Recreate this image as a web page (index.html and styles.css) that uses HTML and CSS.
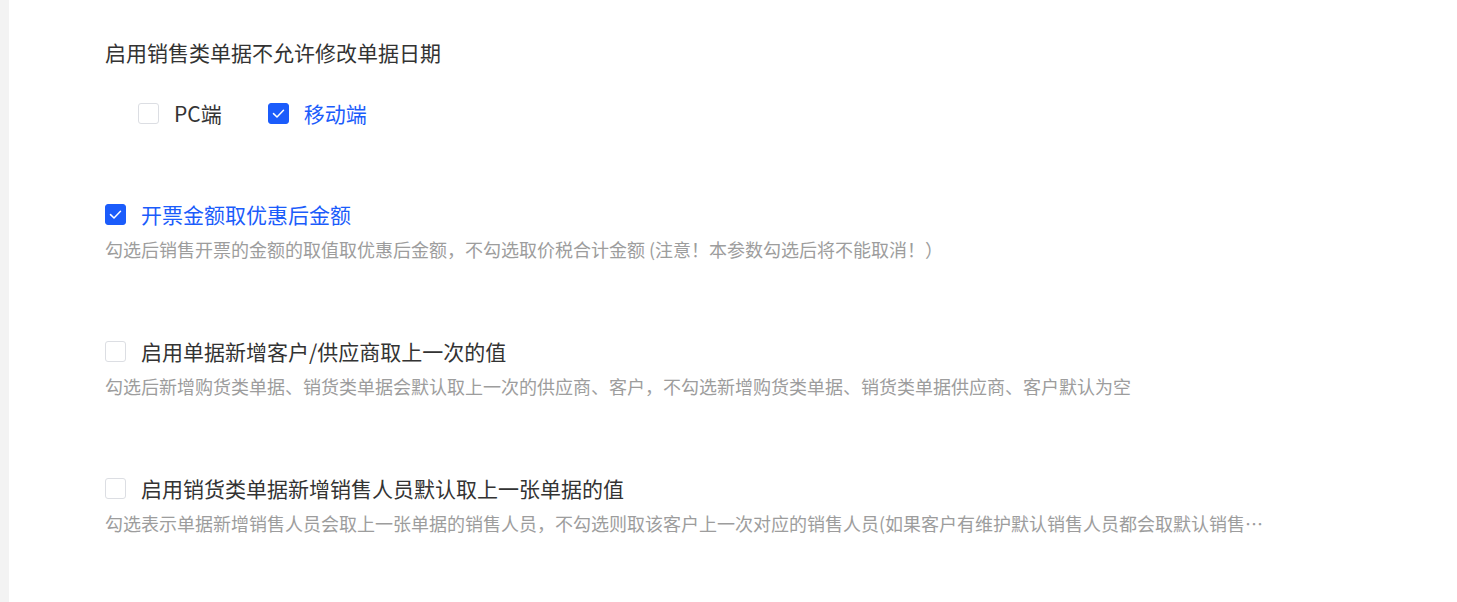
FILE: index.html
```html
<!DOCTYPE html>
<html lang="zh-CN">
<head>
    <meta charset="UTF-8">
    <title>单据参数设置</title>
    <link rel="stylesheet" href="styles.css">
</head>
<body>
    <div class="sideStrip"></div>

    <!-- Settings list -->
    <main class="settings">
        <section class="setting setting-first">
            <div class="settingTitle">启用销售类单据不允许修改单据日期</div>
            <div class="optionRow">
                <label class="check">
                    <span class="box"></span>
                    <span class="checkLabel">PC端</span>
                </label>
                <label class="check isChecked">
                    <span class="box">
                        <svg viewBox="0 0 21 21" width="21" height="21"><polyline points="5.5,10.6 9,14 15.5,7.2" fill="none" stroke="#fff" stroke-width="1.5" stroke-linecap="round" stroke-linejoin="round"/></svg>
                    </span>
                    <span class="checkLabel">移动端</span>
                </label>
            </div>
        </section>

        <section class="setting">
            <label class="check isChecked">
                <span class="box">
                    <svg viewBox="0 0 21 21" width="21" height="21"><polyline points="5.5,10.6 9,14 15.5,7.2" fill="none" stroke="#fff" stroke-width="1.5" stroke-linecap="round" stroke-linejoin="round"/></svg>
                </span>
                <span class="checkLabel">开票金额取优惠后金额</span>
            </label>
            <p class="desc">勾选后销售开票的金额的取值取优惠后金额，不勾选取价税合计金额 (注意！本参数勾选后将不能取消！）</p>
        </section>

        <section class="setting">
            <label class="check">
                <span class="box"></span>
                <span class="checkLabel">启用单据新增客户/供应商取上一次的值</span>
            </label>
            <p class="desc">勾选后新增购货类单据、销货类单据会默认取上一次的供应商、客户，不勾选新增购货类单据、销货类单据供应商、客户默认为空</p>
        </section>

        <section class="setting">
            <label class="check">
                <span class="box"></span>
                <span class="checkLabel">启用销货类单据新增销售人员默认取上一张单据的值</span>
            </label>
            <p class="desc">勾选表示单据新增销售人员会取上一张单据的销售人员，不勾选则取该客户上一次对应的销售人员(如果客户有维护默认销售人员都会取默认销售人员)</p>
        </section>
    </main>
</body>
</html>
```

FILE: styles.css
```css
/* Page base */
body {
    margin: 0;
    background: #fff;
    font-family: "Noto Sans CJK SC", "Liberation Sans", sans-serif;
    color: #333;
    display: flex;
    min-height: 602px;
    overflow: hidden;
}

/* Thin grey strip on the left edge */
.sideStrip {
    width: 9px;
    background: #f3f3f3;
    flex-shrink: 0;
}

/* Settings list */
.settings {
    padding: 37px 0 0 96px;
    flex: 1;
}

.setting {
    margin-bottom: 74px;
}

.setting-first {
    margin-bottom: 71px;
}

.settingTitle {
    font-size: 21px;
    line-height: 30px;
    height: 30px;
}

.optionRow {
    display: flex;
    gap: 46px;
    margin-top: 31px;
    padding-left: 33px;
}

/* Checkbox */
.check {
    display: flex;
    align-items: center;
    height: 30px;
    font-size: 21px;
    cursor: pointer;
}

.box {
    width: 21px;
    height: 21px;
    box-sizing: border-box;
    border: 1px solid #dcdee3;
    border-radius: 3px;
    background: #fff;
    margin-right: 15px;
    display: flex;
    flex-shrink: 0;
}

.box svg {
    display: block;
    margin: -1px;
}

.isChecked .box {
    background: #1b5cfb;
    border-color: #1b5cfb;
}

.isChecked .checkLabel {
    color: #1b5cfb;
}

/* Description under each option */
.desc {
    margin: 8px 0 0;
    font-size: 18px;
    line-height: 25px;
    color: #9d9d9d;
    max-width: 1160px;
    white-space: nowrap;
    overflow: hidden;
    text-overflow: ellipsis;
}
```
